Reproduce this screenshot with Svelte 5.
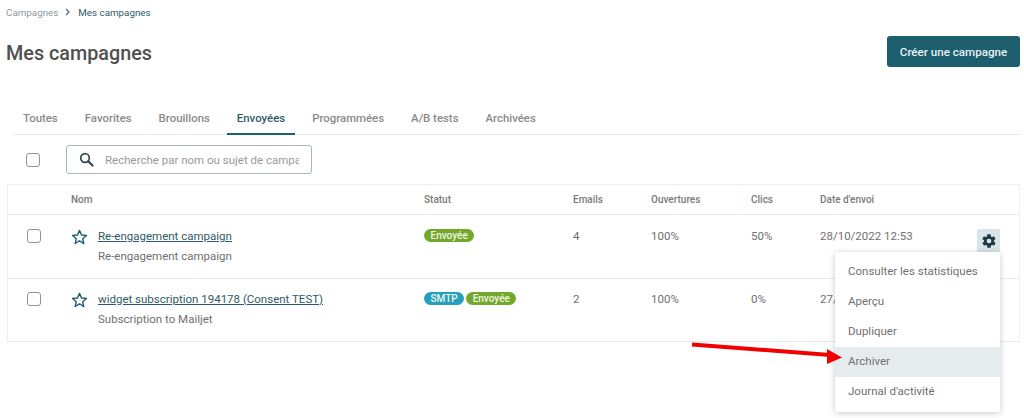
<script>
  const tabs = ['Toutes', 'Favorites', 'Brouillons', 'Envoyées', 'Programmées', 'A/B tests', 'Archivées'];
  const active = 'Envoyées';
  const columns = ['Nom', 'Statut', 'Emails', 'Ouvertures', 'Clics', "Date d'envoi"];

  const campaigns = [
    {
      name: 'Re-engagement campaign',
      subject: 'Re-engagement campaign',
      badges: ['Envoyée'],
      emails: 4,
      opens: '100%',
      clicks: '50%',
      date: '28/10/2022 12:53',
      menu: true,
    },
    {
      name: 'widget subscription 194178 (Consent TEST)',
      subject: 'Subscription to Mailjet',
      badges: ['SMTP', 'Envoyée'],
      emails: 2,
      opens: '100%',
      clicks: '0%',
      date: '27/10/2022 16:20',
      menu: false,
    },
  ];

  const actions = ['Consulter les statistiques', 'Aperçu', 'Dupliquer', 'Archiver', "Journal d'activité"];
</script>

<div class="page">
  <nav class="crumbs">
    <span class="crumb">Campagnes</span>
    <svg class="chevron" width="6" height="8" viewBox="0 0 6 8"><path d="M1 1l3 3-3 3" fill="none" stroke="#5d6b70" stroke-width="1.3" /></svg>
    <span class="current">Mes campagnes</span>
  </nav>

  <header class="head">
    <h1>Mes campagnes</h1>
    <button class="create">Créer une campagne</button>
  </header>

  <div class="tabs">
    {#each tabs as tab}
      <div class="tab" class:active={tab === active}>{tab}</div>
    {/each}
  </div>

  <div class="tools">
    <span class="box"></span>
    <div class="search">
      <svg width="15" height="15" viewBox="0 0 15 15"><circle cx="6" cy="6" r="4.3" fill="none" stroke="#33474e" stroke-width="1.7" /><path d="M9.3 9.3l4.2 4.2" stroke="#33474e" stroke-width="2.2" stroke-linecap="round" /></svg>
      <span class="placeholder">Recherche par nom ou sujet de campagne</span>
    </div>
  </div>

  <div class="table">
    <div class="row header">
      <span></span>
      {#each columns as col}
        <span>{col}</span>
      {/each}
      <span></span>
    </div>

    {#each campaigns as c}
      <div class="row item">
        <span class="box"></span>
        <div class="name">
          <svg class="star" width="17" height="16" viewBox="0 0 24 23"><path d="M12 2l2.9 6.6 7.1.7-5.4 4.7 1.6 7L12 16.9 5.8 20.9l1.6-7L2 9.3l7.1-.7z" fill="none" stroke="#1d5f6e" stroke-width="2" stroke-linejoin="round" /></svg>
          <div>
            <a href="#top">{c.name}</a>
            <div class="subject">{c.subject}</div>
          </div>
        </div>
        <div class="badges">
          {#each c.badges as b}
            <span class="badge" class:smtp={b === 'SMTP'}>{b}</span>
          {/each}
        </div>
        <span>{c.emails}</span>
        <span>{c.opens}</span>
        <span>{c.clicks}</span>
        <span>{c.date}</span>
        <div class="actions">
          {#if c.menu}
            <button class="gear" aria-label="Actions">
              <svg width="16" height="16" viewBox="0 0 24 24"><path fill="#1f3a44" fill-rule="evenodd" d="M19.4 13c.1-.3.1-.7.1-1s0-.7-.1-1l2.1-1.6c.2-.2.2-.4.1-.6l-2-3.5c-.1-.2-.4-.3-.6-.2l-2.5 1c-.5-.4-1.1-.7-1.7-1l-.4-2.7c0-.2-.2-.4-.5-.4h-4c-.2 0-.5.2-.5.4l-.4 2.7c-.6.3-1.2.6-1.7 1l-2.5-1c-.2-.1-.5 0-.6.2l-2 3.5c-.1.2-.1.5.1.6L4.5 11c-.1.3-.1.7-.1 1s0 .7.1 1l-2.1 1.6c-.2.2-.2.4-.1.6l2 3.5c.1.2.4.3.6.2l2.5-1c.5.4 1.1.7 1.7 1l.4 2.7c0 .2.2.4.5.4h4c.2 0 .5-.2.5-.4l.4-2.7c.6-.3 1.2-.6 1.7-1l2.5 1c.2.1.5 0 .6-.2l2-3.5c.1-.2.1-.5-.1-.6zM12 15.5a3.5 3.5 0 1 1 0-7 3.5 3.5 0 0 1 0 7z" /></svg>
            </button>
            <ul class="menu">
              {#each actions as action}
                <li class:hover={action === 'Archiver'}>{action}</li>
              {/each}
            </ul>
          {/if}
        </div>
      </div>
    {/each}
  </div>

  <svg class="arrow" width="160" height="30" viewBox="0 0 160 30">
    <path d="M2 4.500L140 15" stroke="#f00000" stroke-width="4" />
    <path d="M137 9l15 8.500-15 6.500z" fill="#f00000" />
  </svg>
</div>

<style>
  :global(body) {
    margin: 0;
    background: #fff;
  }

  .page {
    position: relative;
    width: 1024px;
    height: 418px;
    overflow: hidden;
    box-sizing: border-box;
    padding: 5px 4px 0 7px;
    font-family: Roboto, "Liberation Sans", sans-serif;
    font-size: 11.500px;
    color: #707070;
  }

  .crumbs {
    display: flex;
    align-items: center;
    gap: 7px;
    height: 14px;
    margin-left: -1px;
    font-size: 9.800px;
  }

  .crumb {
    color: #8f9a9e;
  }

  .current {
    color: #2e5b68;
  }

  .head {
    display: flex;
    justify-content: space-between;
    align-items: center;
    height: 31px;
    margin-top: 17px;
  }

  h1 {
    margin: 4px 0 0 -1px;
    font-size: 19.800px;
    font-weight: 500;
    color: #505050;
  }

  .create {
    width: 133px;
    height: 31px;
    padding: 0;
    border: 0;
    border-radius: 3px;
    background: #1d5f6e;
    color: #e8f0f2;
    font: 500 11.600px Roboto, sans-serif;
  }

  .tabs {
    display: flex;
    gap: 7px;
    height: 33px;
    margin: 34px 0 0 6px;
    border-bottom: 1px solid #e6e8e9;
  }

  .tab {
    box-sizing: border-box;
    height: 34px;
    padding: 10px 10px 0;
    font-size: 11.400px;
    font-weight: 500;
    color: #8a8a8a;
    line-height: 15px;
  }

  .tab.active {
    color: #2e5b68;
    border-bottom: 2px solid #1d5f6e;
  }

  .tools {
    display: flex;
    align-items: center;
    gap: 26px;
    height: 29px;
    margin-top: 10px;
    padding-left: 19px;
  }

  .box {
    display: block;
    box-sizing: border-box;
    width: 14px;
    height: 14px;
    border: 1px solid #8d9599;
    border-radius: 3px;
  }

  .search {
    display: flex;
    align-items: center;
    gap: 11px;
    box-sizing: border-box;
    width: 246px;
    height: 29px;
    padding: 0 12px;
    border: 1px solid #aab6bb;
    border-radius: 3px;
    overflow: hidden;
  }

  .search svg {
    flex: none;
  }

  .placeholder {
    overflow: hidden;
    white-space: nowrap;
    color: #9a9a9a;
  }

  .table {
    margin-top: 10px;
    border-top: 1px solid #eceeef;
    border-right: 1px solid #eceeef;
    border-left: 1px solid #eceeef;
  }

  .row {
    display: grid;
    grid-template-columns: 63px 353px 149px 78px 100px 69px 157px 1fr;
    border-bottom: 1px solid #e6e8e9;
  }

  .header {
    height: 29px;
    align-items: center;
    font-size: 10px;
    font-weight: 500;
    color: #7a7a7a;
  }

  .item {
    box-sizing: border-box;
    height: 63.500px;
    padding-top: 14px;
    line-height: 15px;
  }

  .item:last-child {
    padding-top: 13px;
  }

  .item > .box {
    margin: 0 0 0 19px;
  }

  .name {
    display: flex;
    gap: 10px;
  }

  .star {
    flex: none;
  }

  a {
    color: #2e5b68;
  }

  .subject {
    margin-top: 5px;
  }

  .badges {
    display: flex;
    gap: 2px;
    height: 14px;
  }

  .badge {
    height: 13px;
    padding: 0 6.500px;
    border-radius: 7px;
    background: #73a82c;
    color: #eef5e2;
    font-size: 10px;
    font-weight: 500;
    line-height: 13px;
  }

  .badge.smtp {
    background: #259fc0;
  }

  .actions {
    position: relative;
  }

  .gear {
    display: flex;
    align-items: center;
    justify-content: center;
    width: 23px;
    height: 23px;
    padding: 0;
    border: 0;
    border-radius: 2px 2px 0 0;
    background: #d9e3e8;
  }

  .menu {
    position: absolute;
    z-index: 2;
    top: 23px;
    left: -142px;
    width: 165px;
    margin: 0;
    padding: 5px 0;
    list-style: none;
    background: #fff;
    border-radius: 3px;
    box-shadow: 0 1px 6px rgba(0, 0, 0, 0.22);
  }

  .menu li {
    height: 30px;
    padding-left: 13px;
    line-height: 28px;
  }

  .menu li.hover {
    background: #e6ecee;
  }

  .arrow {
    position: absolute;
    z-index: 3;
    top: 340px;
    left: 690px;
  }
</style>
